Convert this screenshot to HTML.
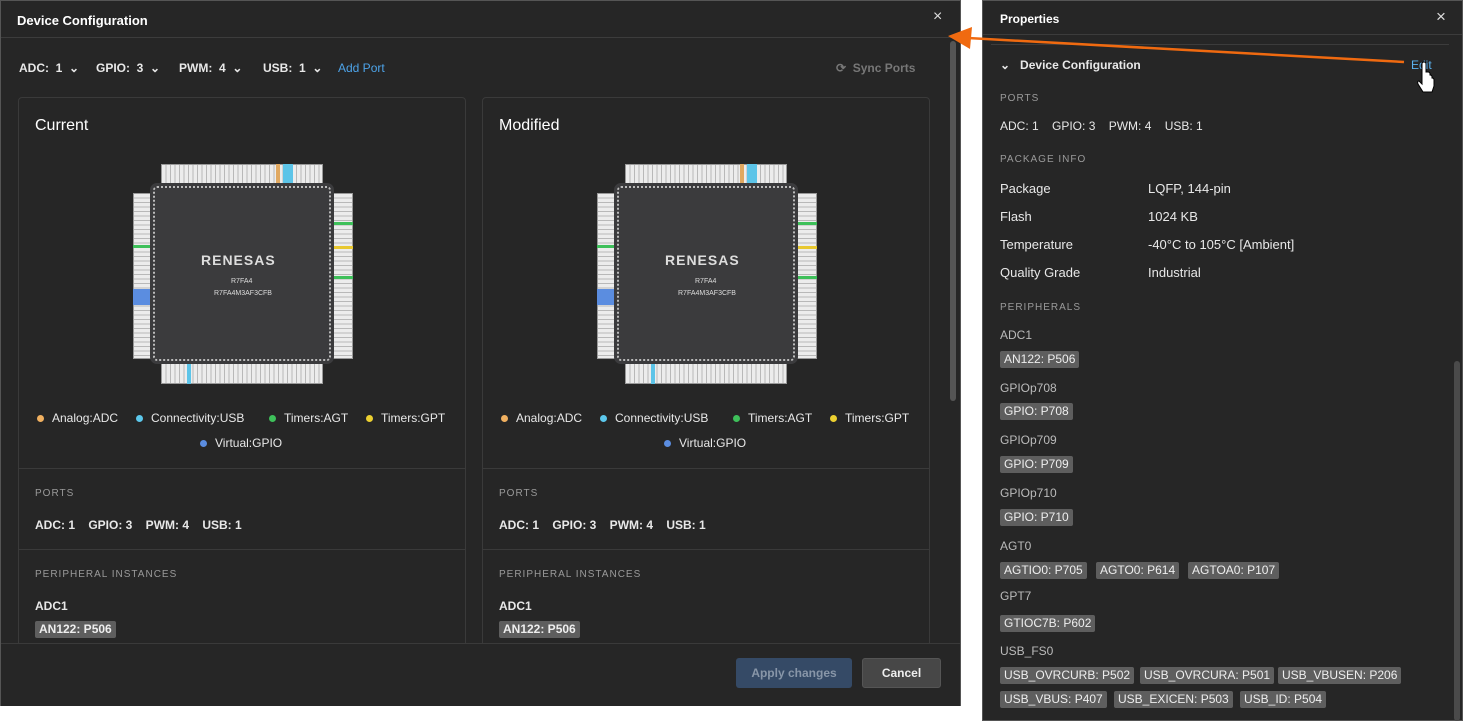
<!DOCTYPE html>
<html><head><meta charset="utf-8"><style>
*{box-sizing:border-box;margin:0;padding:0}
body{width:1465px;height:722px;background:#fff;position:relative;overflow:hidden;font-family:"Liberation Sans",sans-serif;color:#e8e8e8}
.abs{position:absolute}
#dlg{left:0;top:0;width:961px;height:706px;background:#262626;border:1px solid #555}
.t{position:absolute;white-space:nowrap;font-size:12px}
.b{font-weight:bold}
.lbl{font-size:10px;letter-spacing:1px;color:#9a9a9a}
.card{position:absolute;top:96px;width:448px;height:560px;border:1px solid #3a3a3a;border-radius:4px;background:#262626;overflow:hidden}
.hr{position:absolute;left:0;right:0;height:1px;background:#3a3a3a}
.tag{position:absolute;background:#5e5e5e;color:#eee;font-size:12px;padding:1px 4px;border-radius:2px;white-space:nowrap;height:17px;line-height:15px}
.chip{position:absolute;width:220px;height:220px}
.pv{position:absolute;background:repeating-linear-gradient(90deg,#ececec 0 3.5px,#b8b8b8 3.5px 4.5px);border:1px solid #999}
.ph{position:absolute;background:repeating-linear-gradient(180deg,#ececec 0 3.5px,#b8b8b8 3.5px 4.5px);border:1px solid #999}
.body{position:absolute;left:20px;top:22px;width:178px;height:175px;background:#3b3b3d;border-radius:4px;border:2px dotted #bbb;outline:3px solid #3b3b3d}
.dot{display:inline-block;width:7px;height:7px;border-radius:50%;margin-right:8px;vertical-align:0}
</style></head><body>

<div id="dlg" class="abs">
  <div class="t b" style="left:16px;top:12px;font-size:13px;color:#fff">Device Configuration</div>
  <div class="t" style="left:932px;top:7px;font-size:16px;color:#ddd">×</div>
  <div class="hr" style="top:36px;background:#3c3c3c"></div>
  <div class="t b" style="left:18px;top:60px">ADC:&nbsp; 1 &nbsp;⌄</div>
  <div class="t b" style="left:95px;top:60px">GPIO:&nbsp; 3 &nbsp;⌄</div>
  <div class="t b" style="left:178px;top:60px">PWM:&nbsp; 4 &nbsp;⌄</div>
  <div class="t b" style="left:262px;top:60px">USB:&nbsp; 1 &nbsp;⌄</div>
  <div class="t" style="left:337px;top:60px;color:#4da3e8">Add Port</div>
  <div class="t b" style="left:835px;top:60px;color:#777">⟳ &nbsp;Sync Ports</div>

  <div class="abs" style="left:949px;top:40px;width:6px;height:360px;background:#555;border-radius:3px"></div>

  <div class="card" style="left:17px">
    <div class="t" style="left:16px;top:19px;font-size:16px;color:#fff">Current</div>
    <div class="chip" style="left:114px;top:66px">
      <div class="pv" style="left:28px;top:0;width:162px;height:25px"></div>
      <div class="abs" style="left:143px;top:0;width:4px;height:24px;background:#e0a860"></div>
      <div class="abs" style="left:150px;top:0;width:10px;height:24px;background:#5cc4e8"></div>
      <div class="pv" style="left:28px;top:195px;width:162px;height:25px"></div>
      <div class="abs" style="left:54px;top:196px;width:4px;height:24px;background:#5cc4e8"></div>
      <div class="ph" style="left:0;top:29px;width:24px;height:166px"></div>
      <div class="abs" style="left:0;top:125px;width:23px;height:16px;background:#5b8de0"></div>
      <div class="abs" style="left:0;top:81px;width:23px;height:3px;background:#3ec05a"></div>
      <div class="ph" style="left:196px;top:29px;width:24px;height:166px"></div>
      <div class="abs" style="left:197px;top:58px;width:23px;height:3px;background:#3ec05a"></div>
      <div class="abs" style="left:197px;top:82px;width:23px;height:3px;background:#e8c830"></div>
      <div class="abs" style="left:197px;top:112px;width:23px;height:3px;background:#3ec05a"></div>
      <div class="body"></div>
      <div class="t b" style="left:68px;top:88px;font-size:14px;letter-spacing:1px;color:#ddd">RENESAS</div>
      <div class="t" style="left:98px;top:114px;font-size:7px;color:#ddd">R7FA4</div>
      <div class="t" style="left:81px;top:126px;font-size:7px;color:#ddd">R7FA4M3AF3CFB</div>
    </div>
    <div class="t" style="left:18px;top:313px"><span class="dot" style="background:#f0b060"></span>Analog:ADC</div>
    <div class="t" style="left:117px;top:313px"><span class="dot" style="background:#5cc8ec"></span>Connectivity:USB</div>
    <div class="t" style="left:250px;top:313px"><span class="dot" style="background:#3ec05a"></span>Timers:AGT</div>
    <div class="t" style="left:347px;top:313px"><span class="dot" style="background:#ecd030"></span>Timers:GPT</div>
    <div class="t" style="left:181px;top:338px"><span class="dot" style="background:#5b8de0"></span>Virtual:GPIO</div>
    <div class="hr" style="top:370px"></div>
    <div class="t lbl" style="left:16px;top:390px">PORTS</div>
    <div class="t b" style="left:16px;top:420px">ADC: 1 &nbsp;&nbsp; GPIO: 3 &nbsp;&nbsp; PWM: 4 &nbsp;&nbsp; USB: 1</div>
    <div class="hr" style="top:451px"></div>
    <div class="t lbl" style="left:16px;top:471px">PERIPHERAL INSTANCES</div>
    <div class="t b" style="left:16px;top:501px">ADC1</div>
    <div class="tag b" style="left:16px;top:523px">AN122: P506</div>
  </div>

  <div class="card" style="left:481px">
    <div class="t" style="left:16px;top:19px;font-size:16px;color:#fff">Modified</div>
    <div class="chip" style="left:114px;top:66px">
      <div class="pv" style="left:28px;top:0;width:162px;height:25px"></div>
      <div class="abs" style="left:143px;top:0;width:4px;height:24px;background:#e0a860"></div>
      <div class="abs" style="left:150px;top:0;width:10px;height:24px;background:#5cc4e8"></div>
      <div class="pv" style="left:28px;top:195px;width:162px;height:25px"></div>
      <div class="abs" style="left:54px;top:196px;width:4px;height:24px;background:#5cc4e8"></div>
      <div class="ph" style="left:0;top:29px;width:24px;height:166px"></div>
      <div class="abs" style="left:0;top:125px;width:23px;height:16px;background:#5b8de0"></div>
      <div class="abs" style="left:0;top:81px;width:23px;height:3px;background:#3ec05a"></div>
      <div class="ph" style="left:196px;top:29px;width:24px;height:166px"></div>
      <div class="abs" style="left:197px;top:58px;width:23px;height:3px;background:#3ec05a"></div>
      <div class="abs" style="left:197px;top:82px;width:23px;height:3px;background:#e8c830"></div>
      <div class="abs" style="left:197px;top:112px;width:23px;height:3px;background:#3ec05a"></div>
      <div class="body"></div>
      <div class="t b" style="left:68px;top:88px;font-size:14px;letter-spacing:1px;color:#ddd">RENESAS</div>
      <div class="t" style="left:98px;top:114px;font-size:7px;color:#ddd">R7FA4</div>
      <div class="t" style="left:81px;top:126px;font-size:7px;color:#ddd">R7FA4M3AF3CFB</div>
    </div>
    <div class="t" style="left:18px;top:313px"><span class="dot" style="background:#f0b060"></span>Analog:ADC</div>
    <div class="t" style="left:117px;top:313px"><span class="dot" style="background:#5cc8ec"></span>Connectivity:USB</div>
    <div class="t" style="left:250px;top:313px"><span class="dot" style="background:#3ec05a"></span>Timers:AGT</div>
    <div class="t" style="left:347px;top:313px"><span class="dot" style="background:#ecd030"></span>Timers:GPT</div>
    <div class="t" style="left:181px;top:338px"><span class="dot" style="background:#5b8de0"></span>Virtual:GPIO</div>
    <div class="hr" style="top:370px"></div>
    <div class="t lbl" style="left:16px;top:390px">PORTS</div>
    <div class="t b" style="left:16px;top:420px">ADC: 1 &nbsp;&nbsp; GPIO: 3 &nbsp;&nbsp; PWM: 4 &nbsp;&nbsp; USB: 1</div>
    <div class="hr" style="top:451px"></div>
    <div class="t lbl" style="left:16px;top:471px">PERIPHERAL INSTANCES</div>
    <div class="t b" style="left:16px;top:501px">ADC1</div>
    <div class="tag b" style="left:16px;top:523px">AN122: P506</div>
  </div>

  <div class="abs" style="left:0;top:642px;width:959px;height:63px;background:#262626;border-top:1px solid #3a3a3a"></div>
  <div class="abs b" style="left:735px;top:657px;width:116px;height:30px;background:#354a66;border-radius:3px;color:#8896a8;font-size:12px;text-align:center;line-height:30px">Apply changes</div>
  <div class="abs b" style="left:861px;top:657px;width:79px;height:30px;background:#474747;border:1px solid #555;border-radius:3px;color:#eee;font-size:12px;text-align:center;line-height:28px">Cancel</div>
</div>

<div class="abs" style="left:982px;top:0;width:481px;height:721px;background:#262626;border:1px solid #555">
  <div class="t b" style="left:17px;top:11px;color:#fff">Properties</div>
  <div class="t" style="left:453px;top:6px;font-size:17px;color:#ddd">×</div>
  <div class="hr" style="top:33px;background:#3c3c3c"></div>
  <div class="abs" style="left:8px;top:43px;width:458px;height:1px;background:#3c3c3c"></div>
  <div class="t b" style="left:17px;top:57px">⌄&nbsp;&nbsp; Device Configuration</div>
  <div class="t" style="left:428px;top:57px;color:#5cb2ee">Edit</div>
  <div class="t lbl" style="left:17px;top:92px">PORTS</div>
  <div class="t" style="left:17px;top:118px">ADC: 1 &nbsp;&nbsp; GPIO: 3 &nbsp;&nbsp; PWM: 4 &nbsp;&nbsp; USB: 1</div>
  <div class="t lbl" style="left:17px;top:153px">PACKAGE INFO</div>
  <div class="t" style="left:17px;top:180px;font-size:13px">Package</div><div class="t" style="left:165px;top:180px;font-size:13px">LQFP, 144-pin</div>
  <div class="t" style="left:17px;top:208px;font-size:13px">Flash</div><div class="t" style="left:165px;top:208px;font-size:13px">1024 KB</div>
  <div class="t" style="left:17px;top:236px;font-size:13px">Temperature</div><div class="t" style="left:165px;top:236px;font-size:13px">-40°C to 105°C [Ambient]</div>
  <div class="t" style="left:17px;top:264px;font-size:13px">Quality Grade</div><div class="t" style="left:165px;top:264px;font-size:13px">Industrial</div>
  <div class="t lbl" style="left:17px;top:301px">PERIPHERALS</div>
  <div class="t" style="left:17px;top:327px;color:#bbb">ADC1</div>
  <div class="tag" style="left:17px;top:350px">AN122: P506</div>
  <div class="t" style="left:17px;top:380px;color:#bbb">GPIOp708</div>
  <div class="tag" style="left:17px;top:402px">GPIO: P708</div>
  <div class="t" style="left:17px;top:432px;color:#bbb">GPIOp709</div>
  <div class="tag" style="left:17px;top:455px">GPIO: P709</div>
  <div class="t" style="left:17px;top:485px;color:#bbb">GPIOp710</div>
  <div class="tag" style="left:17px;top:508px">GPIO: P710</div>
  <div class="t" style="left:17px;top:538px;color:#bbb">AGT0</div>
  <div class="tag" style="left:17px;top:561px">AGTIO0: P705</div>
  <div class="tag" style="left:113px;top:561px">AGTO0: P614</div>
  <div class="tag" style="left:205px;top:561px">AGTOA0: P107</div>
  <div class="t" style="left:17px;top:588px;color:#bbb">GPT7</div>
  <div class="tag" style="left:17px;top:614px">GTIOC7B: P602</div>
  <div class="t" style="left:17px;top:643px;color:#bbb">USB_FS0</div>
  <div class="tag" style="left:17px;top:666px">USB_OVRCURB: P502</div>
  <div class="tag" style="left:157px;top:666px">USB_OVRCURA: P501</div>
  <div class="tag" style="left:295px;top:666px">USB_VBUSEN: P206</div>
  <div class="tag" style="left:17px;top:690px">USB_VBUS: P407</div>
  <div class="tag" style="left:131px;top:690px">USB_EXICEN: P503</div>
  <div class="tag" style="left:257px;top:690px">USB_ID: P504</div>
  <div class="abs" style="left:471px;top:360px;width:6px;height:360px;background:#4a4a4a;border-radius:3px"></div>
</div>

<svg class="abs" style="left:0;top:0" width="1465" height="722">
  <line x1="1404" y1="62" x2="968" y2="38" stroke="#f06a10" stroke-width="2.5"/>
  <polygon points="948,36 972,27 970,49" fill="#f06a10"/>
  <path d="M1422 70 v14 l-3 -3 q-2 0 -1 3 l5 8 h9 l2 -6 v-6 q0 -2 -2 -2 v-1 q0 -2 -2 -2 v-1 q0 -2 -2 -2 h-2 v-2 v-6 q0 -2 -2 -2 q-2 0 -2 2z" fill="#fff" stroke="#000" stroke-width="1"/>
</svg>
</body></html>
